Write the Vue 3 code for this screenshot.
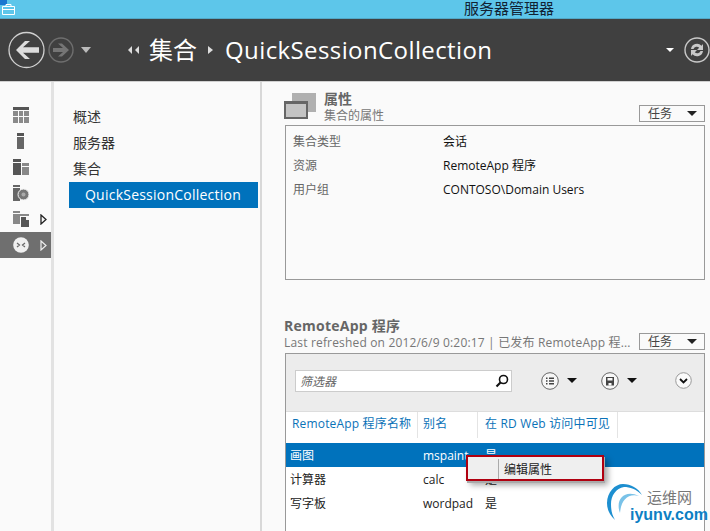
<script setup>
const nav = ['概述', '服务器', '集合']
const props = [
  ['集合类型', '会话'],
  ['资源', 'RemoteApp 程序'],
  ['用户组', 'CONTOSO\\Domain Users'],
]
const rows = [
  ['画图', 'mspaint', '是', true],
  ['计算器', 'calc', '是', false],
  ['写字板', 'wordpad', '是', false],
]
</script>

<template>
  <div class="app">
    <header class="title">
      <svg class="appicon" width="16" height="16" viewBox="0 0 16 16">
        <path d="M0 0h7v5H0z" fill="#1a78d0" />
        <path d="M2.500 6.500h12v8h-12zM6 6.500V4.500h5v2M2.500 9.500h12" fill="none" stroke="#fff" />
      </svg>
      <span class="title-text">服务器管理器</span>
    </header>
    <div class="toolbar">
      <svg class="nav-back" width="38" height="38" viewBox="0 0 38 38">
        <circle cx="18.500" cy="19" r="17.500" fill="none" stroke="#d0d0d0" stroke-width="1.300" />
        <path d="M8 19 17 10h5l-7 6.200h16v5.600H15l7 6.200h-5z" fill="#dcdcdc" />
      </svg>
      <svg class="nav-fwd" width="26" height="26" viewBox="0 0 26 26">
        <circle cx="13" cy="13" r="12" fill="none" stroke="#6e6e6e" stroke-width="1.400" />
        <path d="M21 13 14 6.500h-4l5 4.500H5v4h10l-5 4.500h4z" fill="#757575" />
      </svg>
      <span class="tri-down nav-tri"></span>
      <span class="crumb-back"><i></i><i></i></span>
      <span class="crumb">集合</span>
      <span class="crumb-sep"></span>
      <span class="crumb wide">QuickSessionCollection</span>
      <span class="spring"></span>
      <span class="tri-down white"></span>
      <svg class="refresh" width="26" height="26" viewBox="0 0 26 26">
        <circle cx="13" cy="13" r="12" fill="none" stroke="#c8c8c8" stroke-width="1.400" />
        <path d="M7 12a6 6 0 0 1 10.500-3.200L19 7v6h-6l2.200-2.200A3.500 3.500 0 0 0 9.500 12zM19 14a6 6 0 0 1-10.500 3.200L7 19v-6h6l-2.200 2.200a3.500 3.500 0 0 0 5.700-1.200z" fill="#c8c8c8" />
      </svg>
    </div>
    <div class="body">
      <aside class="rail">
        <div class="rail-item">
          <svg width="16" height="16" viewBox="0 0 16 16">
            <path d="M0 0h16v3H0z" fill="#555" />
            <path d="M0 4h5v5H0zM6 4h4v5H6zM11 4h5v5h-5zM0 10h5v6H0zM6 10h4v6H6zM11 10h5v6h-5z" fill="#8a8a8a" />
          </svg>
        </div>
        <div class="rail-item">
          <svg width="16" height="16" viewBox="0 0 16 16">
            <path d="M4 0h7v3H4z" fill="#555" /><path d="M4 4h7v12H4z" fill="#666" />
          </svg>
        </div>
        <div class="rail-item">
          <svg width="16" height="16" viewBox="0 0 16 16">
            <path d="M0 0h8v3H0zM0 4h8v12H0z" fill="#555" /><path d="M9 4h7v3H9zM9 8h7v8H9z" fill="#888" />
          </svg>
        </div>
        <div class="rail-item">
          <svg width="16" height="16" viewBox="0 0 16 16">
            <path d="M0 0h7v2H0zM0 3h7v13H0z" fill="#666" />
            <circle cx="10.500" cy="9.500" r="5.500" fill="#777" stroke="#f4f4f4" />
            <circle cx="10.500" cy="9.500" r="2" fill="#aaa" />
          </svg>
        </div>
        <div class="rail-item">
          <svg width="16" height="16" viewBox="0 0 16 16">
            <path d="M0 0h7v2H0zM0 3h7v10H0zM7 3h9v2H7z" fill="#888" />
            <path d="M8 6h8v10H8z" fill="#555" />
            <path d="M13 6h3v3h-3z" fill="#f4f4f4" />
          </svg>
          <svg class="rail-arrow" width="7" height="11" viewBox="0 0 7 11">
            <path d="M1 1 6 5.500 1 10z" fill="#fafafa" stroke="#222" stroke-width="1.300" />
          </svg>
        </div>
        <div class="rail-item active">
          <svg width="16" height="16" viewBox="0 0 16 16">
            <circle cx="8" cy="8" r="7.800" fill="#f0f0f0" />
            <path d="M4 6 6.500 8 4 10M12 6 9.500 8 12 10" fill="none" stroke="#666" stroke-width="1.200" />
          </svg>
          <svg class="rail-arrow" width="7" height="11" viewBox="0 0 7 11">
            <path d="M1 1 6 5.500 1 10z" fill="#6f6f6f" stroke="#eee" stroke-width="1.200" />
          </svg>
        </div>
      </aside>
      <nav class="side">
        <div v-for="n in nav" :key="n" class="side-item">{{ n }}</div>
        <div class="side-item selected">QuickSessionCollection</div>
      </nav>
      <main class="main">
        <section class="props">
          <div class="sec-head">
            <svg class="sec-icon" width="32" height="27" viewBox="0 0 32 27">
              <path d="M8 0h24v19H8z" fill="#b0b0b0" />
              <path d="M1 9h22v16H1z" fill="#c4c4c4" stroke="#666" stroke-width="2" />
              <path d="M0 8h24v3H0z" fill="#666" />
            </svg>
            <div class="sec-titles">
              <div class="sec-title">属性</div>
              <div class="sec-sub">集合的属性</div>
            </div>
            <div class="task"><span>任务</span><i class="tri-down dark"></i></div>
          </div>
          <div class="prop-box">
            <div v-for="p in props" :key="p[0]" class="prop-row">
              <span class="prop-key">{{ p[0] }}</span>
              <span class="prop-val">{{ p[1] }}</span>
            </div>
          </div>
        </section>
        <section class="apps">
          <div class="apps-head">
            <div class="apps-titles">
              <div class="sec-title spaced">RemoteApp 程序</div>
              <div class="sec-sub spaced">Last refreshed on 2012/6/9 0:20:17 | 已发布 RemoteApp 程...</div>
            </div>
            <div class="task"><span>任务</span><i class="tri-down dark"></i></div>
          </div>
          <div class="grid-box">
            <div class="filter-bar">
              <div class="filter">
                <span class="filter-ph">筛选器</span>
                <svg width="14" height="14" viewBox="0 0 14 14">
                  <circle cx="8.500" cy="5.500" r="4" fill="none" stroke="#111" stroke-width="1.600" />
                  <path d="M5.500 8.500 1.500 12.500" stroke="#111" stroke-width="2.200" />
                </svg>
              </div>
              <svg class="fb-list" width="18" height="18" viewBox="0 0 18 18">
                <circle cx="9" cy="9" r="8.300" fill="#f7f7f7" stroke="#666" />
                <path d="M5 5.500h1.500V7H5zM8 5.500h5V7H8zM5 8.300h1.500v1.500H5zM8 8.300h5v1.500H8zM5 11h1.500v1.500H5zM8 11h5v1.500H8z" fill="#444" />
              </svg>
              <span class="tri-down black"></span>
              <svg class="fb-save" width="18" height="18" viewBox="0 0 18 18">
                <circle cx="9" cy="9" r="8.300" fill="#f7f7f7" stroke="#666" />
                <path d="M5 5h8v8.500H5z" fill="#444" /><path d="M6.500 6h5v2.500h-5zM7.500 11h3v2.500h-3z" fill="#f7f7f7" />
              </svg>
              <span class="tri-down black"></span>
              <svg class="fb-more" width="17" height="17" viewBox="0 0 17 17">
                <circle cx="8.500" cy="8.500" r="7.800" fill="#fafafa" stroke="#999" />
                <path d="M5 7l3.500 3.500L12 7" fill="none" stroke="#111" stroke-width="1.800" />
              </svg>
            </div>
            <div class="table">
              <div class="thead">
                <span class="th c1">RemoteApp 程序名称</span>
                <span class="th c2">别名</span>
                <span class="th c3">在 RD Web 访问中可见</span>
              </div>
              <div v-for="r in rows" :key="r[0]" class="tr" :class="{ on: r[3] }">
                <span class="c1">{{ r[0] }}</span>
                <span class="c2">{{ r[1] }}</span>
                <span class="c3">{{ r[2] }}</span>
              </div>
            </div>
          </div>
        </section>
      </main>
    </div>
    <div class="menu"><span class="menu-label">编辑属性</span></div>
    <div class="mark">
      <svg width="44" height="42" viewBox="0 0 44 42">
        <path d="M9 38C3 32 1 27 1 21 1 10 9 2 17 2c8 0 15 4 19 11-6-6-12-8-18-8C10 6 5 14 5 22c0 6 1 11 4 16z" fill="#1d8fd0" />
        <path d="M14 31C9 18 18 7 33 14 22 11 15 18 14 31z" fill="#79c2e8" />
      </svg>
      <span class="mark-cn">运维网</span>
      <span class="mark-en">iyunv.com</span>
    </div>
  </div>
</template>

<style scoped>
.app {
  position: relative;
  width: 710px;
  height: 531px;
  overflow: hidden;
  background: #fafafa;
  font-family: "Open Sans", "Noto Sans CJK SC", sans-serif;
  font-size: 12px;
  color: #222;
}
.title {
  position: relative;
  height: 18px;
  background: #5dc6ea;
  border-bottom: 1px solid #52a8c8;
  display: flex;
  justify-content: flex-end;
  padding-right: 156px;
}
.appicon { position: absolute; left: 0; top: 0; }
.title-text { font-size: 15px; line-height: 16px; color: #123; }
.toolbar {
  height: 62px;
  background: #404040;
  border-bottom: 1px solid #d0d0d0;
  display: flex;
  align-items: center;
  padding: 0 0 0 8px;
  color: #fff;
}
.nav-fwd { margin-left: 2px; }
.tri-down {
  display: inline-block;
  width: 0;
  height: 0;
  border-left: 5px solid transparent;
  border-right: 5px solid transparent;
  border-top: 6px solid #bbb;
}
.nav-tri { margin-left: 7px; }
.crumb-back { display: flex; gap: 3px; margin-left: 37px; margin-right: 10px; }
.crumb-back i {
  width: 0; height: 0;
  border-top: 4px solid transparent;
  border-bottom: 4px solid transparent;
  border-right: 4px solid #ddd;
}
.crumb { font-size: 24px; line-height: 30px; color: #fff; }
.crumb.wide { letter-spacing: .4px; white-space: nowrap; }
.crumb-sep {
  width: 0; height: 0;
  margin: 0 12px 0 11px;
  border-top: 4px solid transparent;
  border-bottom: 4px solid transparent;
  border-left: 5px solid #ddd;
}
.spring { flex: 1; }
.tri-down.white { border-top-color: #fff; border-left-width: 4px; border-right-width: 4px; border-top-width: 4px; }
.refresh { margin: 0 0 0 10px; }
.body { display: flex; height: 449px; }
.rail {
  width: 51px;
  border-right: 3px solid #e2e2e2;
  padding-top: 20px;
  flex: none;
}
.rail-item {
  position: relative;
  height: 26px;
  display: flex;
  align-items: center;
  padding-left: 13px;
}
.rail-item.active { background: #6f6f6f; }
.rail-arrow { position: absolute; left: 40px; top: 8px; }
.side {
  width: 208px;
  flex: none;
  border-right: 2px solid #d8d8d8;
  padding: 22px 0 0 15px;
  box-sizing: border-box;
  font-size: 14px;
}
.side-item { height: 26px; line-height: 26px; padding-left: 4px; color: #333; }
.side-item.selected {
  background: #0072bc;
  color: #fff;
  padding-left: 16px;
  width: 189px;
  box-sizing: border-box;
  letter-spacing: .23px;
  white-space: nowrap;
}
.main { flex: 1; padding: 6px 5px 0 22px; min-width: 0; }
.sec-head { display: flex; align-items: flex-end; height: 34px; }
.sec-icon { flex: none; margin-bottom: 2px; margin-right: 8px; }
.sec-titles { flex: 1; margin-bottom: -2px; }
.sec-title { font-weight: 700; color: #666; font-size: 14px; line-height: 17px; white-space: nowrap; }
.sec-title.spaced { letter-spacing: .25px; }
.sec-sub { color: #777; font-size: 12px; line-height: 16px; margin-top: 1px; white-space: nowrap; }
.sec-sub.spaced { letter-spacing: .17px; }
.task {
  width: 66px;
  height: 17px;
  flex: none;
  border: 1px solid #999;
  display: flex;
  align-items: center;
  justify-content: space-between;
  padding: 0 7px 0 8px;
  box-sizing: border-box;
  line-height: 15px;
  color: #444;
}
.tri-down.dark { border-top-color: #222; border-top-width: 5px; }
.prop-box {
  margin: 3px 0 0 1px;
  height: 155px;
  border: 1px solid #999;
  padding-top: 4px;
  box-sizing: border-box;
}
.prop-row { display: flex; height: 24px; line-height: 24px; padding-left: 7px; }
.prop-key { width: 150px; color: #666; }
.prop-val { color: #111; }
.apps { margin-top: 37px; }
.apps-head { display: flex; align-items: flex-end; }
.apps-titles { flex: 1; min-width: 0; margin-bottom: -1px; }
.grid-box {
  margin: 3px 0 0 1px;
  border: 1px solid #999;
  border-bottom: none;
  background: #ececec;
}
.filter-bar {
  display: flex;
  align-items: center;
  height: 53px;
  padding: 0 0 4px 9px;
  border-bottom: 1px solid #ddd;
}
.filter {
  width: 217px;
  height: 22px;
  box-sizing: border-box;
  border: 1px solid #ccc;
  background: #fff;
  display: flex;
  align-items: center;
  justify-content: space-between;
  padding: 0 2px 0 4px;
}
.filter-ph { font-style: italic; color: #666; }
.fb-list { margin-left: 29px; }
.tri-down.black { border-top-color: #111; border-top-width: 5px; margin-left: 8px; }
.fb-save { margin-left: 24px; }
.fb-more { margin-left: 38px; }
.table { background: #fff; height: 200px; }
.thead { display: flex; height: 31px; color: #0a72b8; letter-spacing: .17px; }
.th { border-right: 1px solid #e4e4e4; height: 26px; line-height: 24px; white-space: nowrap; }
.thead .c1 { padding-left: 6px; }
.thead .c3 { width: 140px; }
.tr { display: flex; height: 24px; line-height: 25px; color: #222; }
.tr.on { background: #0072bc; color: #fff; }
.c1 { width: 132px; padding-left: 4px; box-sizing: border-box; flex: none; white-space: nowrap; }
.c2 { width: 60px; padding-left: 5px; box-sizing: border-box; flex: none; }
.c3 { padding-left: 7px; box-sizing: border-box; }
.menu {
  position: absolute;
  left: 466px;
  top: 455px;
  width: 138px;
  height: 26px;
  box-sizing: border-box;
  border: 2px solid #b00010;
  background: #efefef;
  box-shadow: 1px 2px 0 #aaa, 4px 4px 6px rgba(0, 0, 0, .35);
  display: flex;
  align-items: flex-end;
  padding-left: 30px;
}
.menu-label { border-left: 1px solid #aaa; padding-left: 5px; height: 20px; line-height: 22px; color: #222; }
.mark {
  position: absolute;
  left: 606px;
  top: 482px;
  width: 104px;
  height: 49px;
}
.mark svg { position: absolute; left: 0; top: 0; }
.mark-cn { position: absolute; left: 41px; top: 5px; font-size: 15px; line-height: 20px; color: #777; }
.mark-en { position: absolute; left: 24px; top: 23px; font: 700 16px/20px "Liberation Sans", sans-serif; color: #0d7fc4; white-space: nowrap; }
</style>
